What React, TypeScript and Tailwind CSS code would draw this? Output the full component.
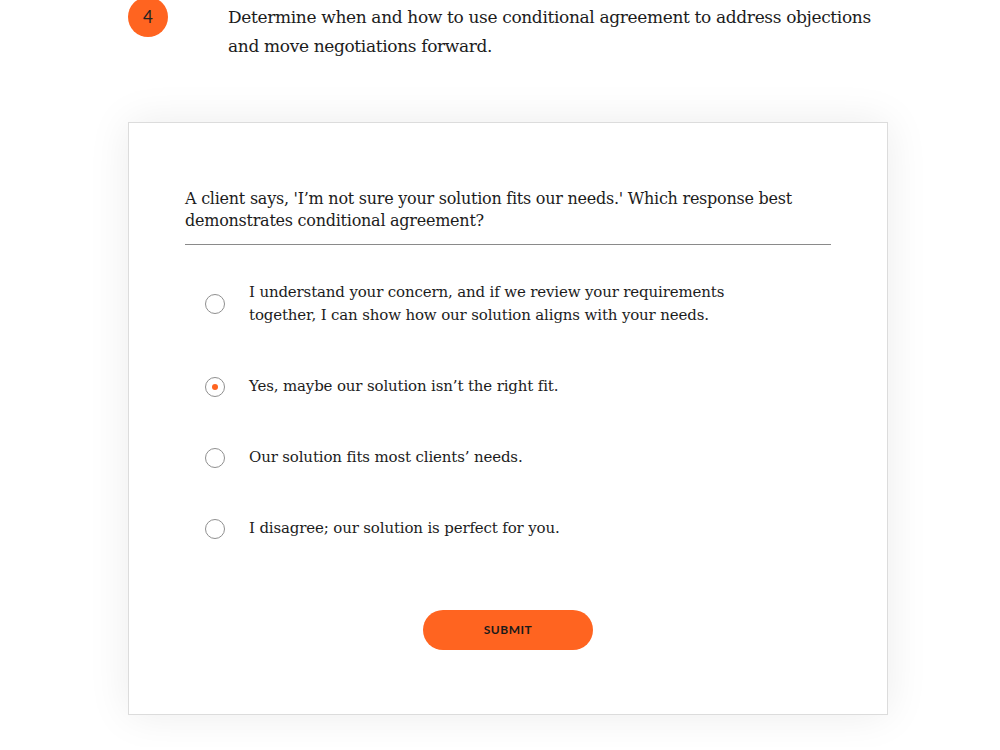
import { useState } from "react";

const options = [
  "I understand your concern, and if we review your requirements together, I can show how our solution aligns with your needs.",
  "Yes, maybe our solution isn\u2019t the right fit.",
  "Our solution fits most clients\u2019 needs.",
  "I disagree; our solution is perfect for you.",
];

export default function App() {
  const [picked, setPicked] = useState(1);

  return (
    <div className="min-h-screen bg-white text-[#1c1c1c] [font-family:'DejaVu_Serif',serif]">
      {/* objective row */}
      <div className="flex items-start pl-[128px] -mt-[3px]">
        <div className="flex h-10 w-10 shrink-0 items-center justify-center rounded-full bg-[#ff6420] text-[17px] text-[#222] [font-family:Lato,sans-serif]">
          4
        </div>
        <p className="ml-[60px] mt-[6px] w-[660px] text-[17px] leading-[29px] tracking-[-0.35px]">
          Determine when and how to use conditional agreement to address objections and move negotiations forward.
        </p>
      </div>

      {/* quiz card */}
      <div className="mx-[128px] mt-[61px] w-[760px] border border-[#dcdcdc] bg-white px-14 pt-[65px] pb-16 shadow-[0_0_40px_rgba(0,0,0,0.08)]">
        <p className="border-b border-[#8a8a8a] pb-3 text-[16px] leading-[22px] tracking-[-0.25px]">
          A client says, 'I’m not sure your solution fits our needs.' Which response best demonstrates conditional agreement?
        </p>

        <div className="mt-[12px] flex flex-col">
          {options.map((o, i) => (
            <label key={i} className="flex cursor-pointer items-center py-6 pl-5" onClick={() => setPicked(i)}>
              <span className="flex h-5 w-5 shrink-0 items-center justify-center rounded-full border border-[#8f8f8f] bg-white">
                {picked === i && <span className="h-[6px] w-[6px] rounded-full bg-[#ff6420]" />}
              </span>
              <span className="ml-6 max-w-[500px] text-[15px] leading-[23px] tracking-[-0.15px]">{o}</span>
            </label>
          ))}
        </div>

        <div className="mt-[46px] flex justify-center">
          <button className="h-10 w-[170px] rounded-full bg-[#ff6420] text-[12px] font-bold tracking-[0.5px] text-[#1a1a1a] [font-family:Lato,sans-serif]">
            SUBMIT
          </button>
        </div>
      </div>
    </div>
  );
}
